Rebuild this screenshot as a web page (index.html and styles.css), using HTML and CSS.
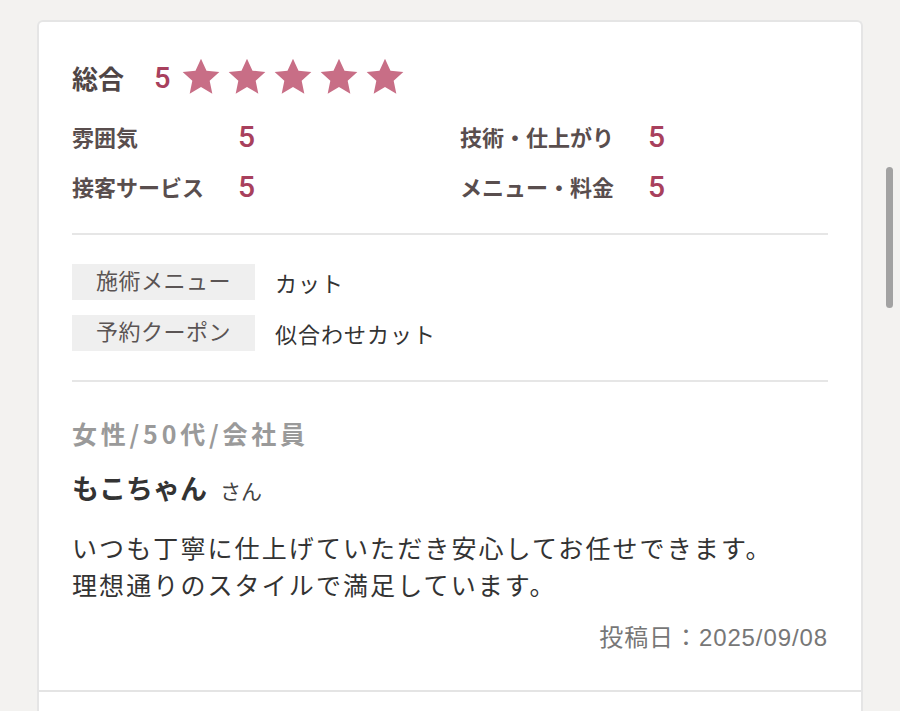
FILE: index.html
```html
<!DOCTYPE html>
<html lang="ja">
<head>
<meta charset="utf-8">
<title>口コミ</title>
<link rel="stylesheet" href="styles.css">
</head>
<body>
<div class="list">
  <div class="review">
    <div class="overall">
      <span class="overall-label">総合</span>
      <span class="overall-score">5</span>
      <span class="stars">
        <svg class="star" viewBox="0 0 24 24"><polygon points="12,1 15.3,8.2 23,9 17.2,14.3 18.8,22 12,18 5.2,22 6.8,14.3 1,9 8.7,8.2"/></svg>
        <svg class="star" viewBox="0 0 24 24"><polygon points="12,1 15.3,8.2 23,9 17.2,14.3 18.8,22 12,18 5.2,22 6.8,14.3 1,9 8.7,8.2"/></svg>
        <svg class="star" viewBox="0 0 24 24"><polygon points="12,1 15.3,8.2 23,9 17.2,14.3 18.8,22 12,18 5.2,22 6.8,14.3 1,9 8.7,8.2"/></svg>
        <svg class="star" viewBox="0 0 24 24"><polygon points="12,1 15.3,8.2 23,9 17.2,14.3 18.8,22 12,18 5.2,22 6.8,14.3 1,9 8.7,8.2"/></svg>
        <svg class="star" viewBox="0 0 24 24"><polygon points="12,1 15.3,8.2 23,9 17.2,14.3 18.8,22 12,18 5.2,22 6.8,14.3 1,9 8.7,8.2"/></svg>
      </span>
    </div>
    <div class="ratings">
      <div class="rating-col left">
        <span class="r-label">雰囲気</span><span class="r-score">5</span>
        <span class="r-label">接客サービス</span><span class="r-score">5</span>
      </div>
      <div class="rating-col right">
        <span class="r-label">技術・仕上がり</span><span class="r-score">5</span>
        <span class="r-label">メニュー・料金</span><span class="r-score">5</span>
      </div>
    </div>
    <hr class="divider first">
    <div class="details">
      <div class="detail-row"><span class="tag">施術メニュー</span><span class="tag-value">カット</span></div>
      <div class="detail-row"><span class="tag">予約クーポン</span><span class="tag-value">似合わせカット</span></div>
    </div>
    <hr class="divider second">
    <div class="profile">女性/50代/会社員</div>
    <div class="name"><span class="nickname">もこちゃん</span><span class="honorific">さん</span></div>
    <p class="body">いつも丁寧に仕上げていただき安心してお任せできます。<br>理想通りのスタイルで満足しています。</p>
    <div class="date">投稿日：2025/09/08</div>
  </div>
  <div class="review next"></div>
</div>
<div class="scrollbar"></div>
</body>
</html>
```

FILE: styles.css
```css
html, body {
  margin: 0;
  padding: 0;
  height: 100%;
  overflow: hidden;
}
body {
  background: #f3f2f0;
  font-family: "Liberation Sans", "Noto Sans CJK JP", sans-serif;
  color: #333;
}
.list {
  margin: 20px 37px 0 37px;
  background: #fff;
  border: 2px solid #e5e5e5;
  border-bottom: none;
  border-radius: 6px 6px 0 0;
  min-height: 760px;
}
.review {
  padding: 33px 33px 37px 33px;
  border-bottom: 2px solid #e4e4e4;
}
.review.next {
  border-bottom: none;
  height: 60px;
}
.overall {
  display: flex;
  align-items: center;
  height: 44px;
}
.overall-label {
  font-size: 26px;
  font-weight: bold;
  color: #4f4545;
  width: 82px;
}
.overall-score {
  font-family: Roboto, "Liberation Sans", sans-serif;
  font-weight: 500;
  font-size: 29px;
  color: #a8405d;
  margin-right: 11px;
  margin-top: 2px;
}
.stars {
  display: flex;
  gap: 6px;
}
.star {
  width: 40px;
  height: 40px;
  fill: #c86e86;
  display: block;
}
.ratings {
  display: flex;
  margin-top: 12px;
}
.rating-col {
  display: grid;
  grid-auto-rows: 50px;
  align-items: center;
}
.rating-col.left {
  width: 388px;
  grid-template-columns: 166px auto;
}
.rating-col.right {
  grid-template-columns: 188px auto;
}
.r-label {
  font-size: 22px;
  font-weight: bold;
  color: #594e4e;
}
.r-score {
  font-family: Roboto, "Liberation Sans", sans-serif;
  font-weight: 500;
  font-size: 30px;
  color: #a8405d;
  line-height: 1;
  padding-top: 2px;
}
.divider {
  border: none;
  height: 2px;
  background: #e6e6e6;
  margin: 0;
}
.divider.first {
  margin-top: 22px;
}
.details {
  display: flex;
  flex-direction: column;
  gap: 15px;
  margin: 29px 0 29px 0;
}
.detail-row {
  display: flex;
  align-items: center;
  height: 36px;
}
.tag {
  width: 183px;
  height: 36px;
  line-height: 36px;
  background: #efefef;
  text-align: center;
  font-size: 22px;
  color: #5a5454;
  letter-spacing: 0.5px;
}
.tag-value {
  margin-left: 20px;
  font-size: 22px;
  color: #333;
  letter-spacing: 1px;
}
.profile {
  margin-top: 34px;
  font-family: "Noto Sans CJK JP", sans-serif;
  font-size: 25px;
  line-height: 34px;
  font-weight: bold;
  color: #9a9a9a;
  letter-spacing: 3.8px;
}
.name {
  margin-top: 22px;
  line-height: 36px;
  display: flex;
  align-items: baseline;
}
.nickname {
  font-size: 27px;
  font-weight: bold;
  color: #333;
}
.honorific {
  font-size: 21px;
  color: #444;
  margin-left: 13px;
}
.body {
  margin: 21px 0 0 0;
  font-size: 25px;
  line-height: 37px;
  letter-spacing: 2.1px;
  color: #333;
}
.date {
  margin-top: 18px;
  text-align: right;
  font-size: 24px;
  line-height: 30px;
  letter-spacing: 0.9px;
  color: #777;
}
.scrollbar {
  position: absolute;
  left: 886px;
  top: 167px;
  width: 7px;
  height: 141px;
  border-radius: 4px;
  background: #a2a2a2;
}
```
